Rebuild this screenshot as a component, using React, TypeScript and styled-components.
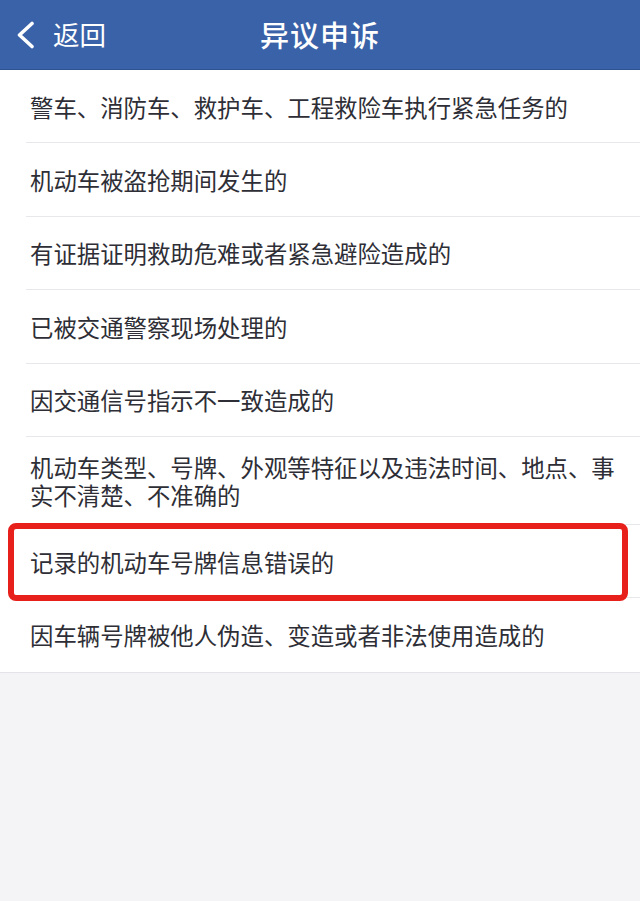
import * as React from 'react';
import styled, { createGlobalStyle } from 'styled-components';

const Global = createGlobalStyle`
	html, body {
		margin: 0;
		padding: 0;
		background: #f4f4f7;
	}
	body {
		font-family: "Noto Sans CJK SC", "Noto Sans", sans-serif;
	}
`;

const Page = styled.div`
	width: 640px;
	min-height: 901px;
	background: #f4f4f7;
`;

const NavBar = styled.header`
	height: 69px;
	background: #3962a8;
	border-bottom: 1px solid #2f5290;
	display: grid;
	grid-template-columns: 1fr auto 1fr;
	align-items: center;
	color: #fff;
`;

const Back = styled.div`
	display: flex;
	align-items: center;
	gap: 18px;
	padding-left: 16px;
	font-size: 26.5px;
	line-height: 1;
`;

const Title = styled.h1`
	margin: 0;
	font-size: 29px;
	font-weight: 500;
	letter-spacing: 1px;
	line-height: 1;
`;

const List = styled.ul`
	list-style: none;
	margin: 0;
	padding: 0;
	background: #fff;
	border-bottom: 1px solid #e4e4e8;
`;

const Row = styled.li<{ $last?: boolean }>`
	position: relative;
	box-sizing: border-box;
	min-height: 73.4px;
	display: flex;
	align-items: center;
	padding: 16px 22px 16px 30px;
	font-size: 23.4px;
	line-height: 28px;
	color: #2e2e36;
	&::after {
		content: '';
		display: ${(p) => (p.$last ? 'none' : 'block')};
		position: absolute;
		left: 26px;
		right: 0;
		bottom: 0;
		height: 1px;
		background: #e8e8ec;
	}
`;

const Highlight = styled.div`
	position: absolute;
	top: -2px;
	bottom: -3px;
	left: 8px;
	right: 12px;
	border: 6px solid #e8201c;
	border-radius: 8px;
	pointer-events: none;
	z-index: 1;
`;

const items = [
	'警车、消防车、救护车、工程救险车执行紧急任务的',
	'机动车被盗抢期间发生的',
	'有证据证明救助危难或者紧急避险造成的',
	'已被交通警察现场处理的',
	'因交通信号指示不一致造成的',
	'机动车类型、号牌、外观等特征以及违法时间、地点、事实不清楚、不准确的',
	'记录的机动车号牌信息错误的',
	'因车辆号牌被他人伪造、变造或者非法使用造成的',
];

export default function App() {
	return (
		<Page>
			<Global />
			<NavBar>
				<Back>
					<svg width="19" height="28" viewBox="0 0 19 28">
						<path d="M16 2.5 L3.5 14 L16 25.5" fill="none" stroke="#fff" strokeWidth="3.6" strokeLinecap="round" strokeLinejoin="round" />
					</svg>
					<span>返回</span>
				</Back>
				<Title>异议申诉</Title>
				<div />
			</NavBar>
			<List>
				{items.map((text, i) => (
					<Row key={i} $last={i === items.length - 1}>
						{i === 6 && <Highlight />}
						{text}
					</Row>
				))}
			</List>
		</Page>
	);
}
